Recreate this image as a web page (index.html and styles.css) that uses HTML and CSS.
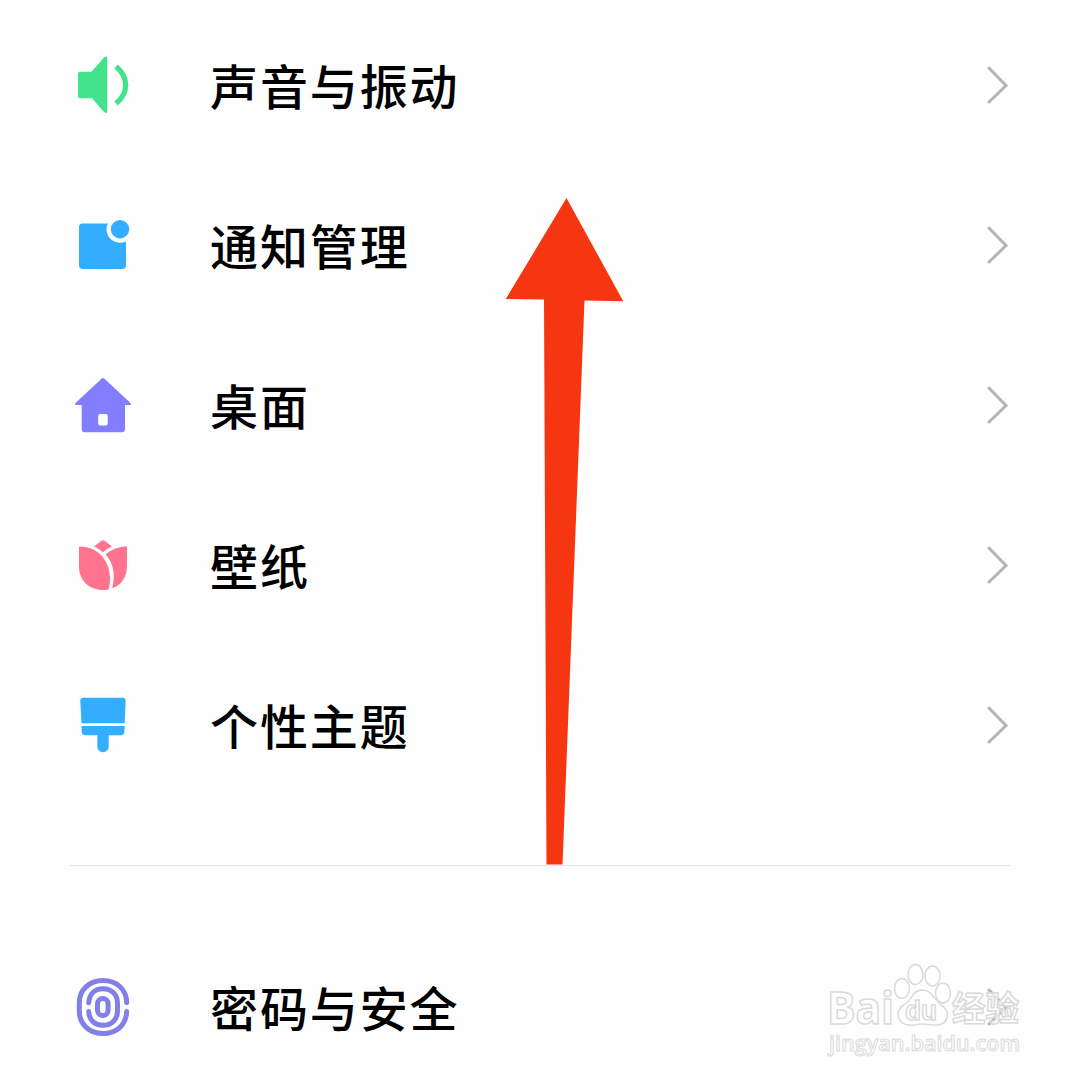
FILE: index.html
```html
<!DOCTYPE html>
<html lang="zh-CN">
<head>
<meta charset="utf-8">
<title>设置</title>
<link rel="stylesheet" href="styles.css">
</head>
<body>
<main class="screen">
  <ul class="group">
    <li class="row">
      <svg class="icon green" viewBox="73 55 60 60"><path d="M80 71.7H91.5L104 57.5Q107.3 55 107.3 58.500V111Q107.3 114.500 104 112L92 98.300H80Q78 98.300 78 96.300V73.700Q78 71.700 80 71.700Z"/><path class="arc" d="M116 66.500Q125.700 74.500 125.700 85T116 103.500"/></svg>
      <span class="label">声音与振动</span>
      <svg class="chevron" viewBox="0 0 24 40"><path d="M3 3L20 20.500L3 37"/></svg>
    </li>
    <li class="row">
      <svg class="icon blue" viewBox="73 215 60 60"><path d="M82.500 223.500H107.700A13.600 13.600 0 0 0 126 241.400V265Q126 269 122 269H83Q79 269 79 265V227Q79 223.500 82.500 223.500Z"/><circle cx="120" cy="229.200" r="9.200"/></svg>
      <span class="label">通知管理</span>
      <svg class="chevron" viewBox="0 0 24 40"><path d="M3 3L20 20.500L3 37"/></svg>
    </li>
    <li class="row">
      <svg class="icon purple" viewBox="73 375 60 60"><path fill-rule="evenodd" d="M101.500 378.700Q103 377.400 104.500 378.700L130.500 403Q132 405 129 405H125V429Q125 432.300 121.700 432.300H85Q81.700 432.300 81.700 429V405H77Q74 405 75.500 403ZM100.200 414Q98.200 414 98.200 416V423.500Q98.200 425.500 100.200 425.500H105.700Q107.700 425.500 107.700 423.500V416Q107.700 414 105.700 414Z"/></svg>
      <span class="label">桌面</span>
      <svg class="chevron" viewBox="0 0 24 40"><path d="M3 3L20 20.500L3 37"/></svg>
    </li>
    <li class="row">
      <svg class="icon pink" viewBox="73 535 60 60"><path d="M79 547.500Q79 546.500 80 546.500C98 546.500 110 561 110 579Q110 585 108.500 589.500C92 592.500 79 582 79 567Z"/><path d="M126 546.200Q127 546.200 127 547.200V566C127 577 121 585.500 112.300 588.200C115.500 575 113.500 563 105.500 554.500C111 549.500 118 547 126 546.200Z"/><path d="M94 546.500L101.500 540.800Q103 539.500 104.500 540.800L112 546.500Q107 548.500 102.800 552.200Q99 548.700 94 546.500Z"/></svg>
      <span class="label">壁纸</span>
      <svg class="chevron" viewBox="0 0 24 40"><path d="M3 3L20 20.500L3 37"/></svg>
    </li>
    <li class="row">
      <svg class="icon blue" viewBox="73 695 60 60"><path d="M83.500 697.700H122.500Q125.700 697.700 125.600 701L124.700 723.200H81.500L80.300 701Q80.200 697.700 83.500 697.700Z"/><path d="M81.500 726H124.700L124.300 732Q124 735.300 120.800 735.300H108.700V746.500A5.700 5.700 0 0 1 97.300 746.500V735.300H85.500Q82 735.300 81.800 732Z"/></svg>
      <span class="label">个性主题</span>
      <svg class="chevron" viewBox="0 0 24 40"><path d="M3 3L20 20.500L3 37"/></svg>
    </li>
  </ul>
  <hr class="divider">
  <ul class="group">
    <li class="row">
      <svg class="icon print" viewBox="73 977 60 60"><rect x="97.500" y="998.500" width="10.600" height="17" rx="5.300"/><path d="M88.700 1002.800C89.500 993.500 95 988.700 102.800 988.700C112 988.700 117.500 995 117.500 1003V1011C117.500 1019 112 1025.300 102.800 1025.300C95 1025.300 89 1020 88.700 1011.500"/><path d="M126.700 1002.800C126.500 989 116.500 980.500 103 980.500C89 980.500 79.300 990 79.300 1003V1011C79.300 1024 89 1033.500 103 1033.500C116.500 1033.500 126 1025 126.700 1011.500"/></svg>
      <span class="label">密码与安全</span>
      <svg class="chevron" viewBox="0 0 24 40"><path d="M3 3L20 20.500L3 37"/></svg>
    </li>
  </ul>
  <svg class="swipe" viewBox="0 0 120 670"><path d="M61.500 1L118.300 104.300L79.500 103.500L57.500 667.500H41.500L39 102.500L0.800 102Z"/></svg>
  <svg class="watermark" viewBox="820 950 220 120">
    <text class="brand" x="827" y="1024" textLength="67" lengthAdjust="spacingAndGlyphs">Bai</text>
    <g class="paw"><ellipse cx="902" cy="988.500" rx="7.500" ry="10"/><ellipse cx="915.500" cy="974.500" rx="7.500" ry="10"/><ellipse cx="932.500" cy="976" rx="7.500" ry="10"/><ellipse cx="943" cy="993" rx="7.500" ry="10"/><path d="M922 990C932 990 934 999 941 1005C951 1011 949 1025 936 1025C928 1025 924 1023 917 1024.500C906 1027 898 1023 898 1013C899 1005 908 1004 911 998C914 992 917 990 922 990Z"/></g>
    <text class="du" x="905" y="1020" textLength="32" lengthAdjust="spacingAndGlyphs">du</text>
    <text class="cjk" x="952" y="1021" textLength="67" lengthAdjust="spacingAndGlyphs">经验</text>
    <text class="site" x="829" y="1051" textLength="191" lengthAdjust="spacingAndGlyphs">jingyan.baidu.com</text>
  </svg>
</main>
</body>
</html>
```
FILE: styles.css
```css
* { box-sizing: border-box; }
body { margin: 0; background: #fefefe; }
.screen {
  position: relative;
  width: 1080px;
  height: 1080px;
  padding-top: 5px;
  overflow: hidden;
  font-family: "Noto Sans CJK SC", sans-serif;
}
.group { list-style: none; margin: 0; padding: 0; }
.row {
  display: flex;
  align-items: center;
  height: 160px;
  padding: 0 70px 0 73px;
}
.icon { width: 60px; height: 60px; flex: none; }
.green { fill: #43e38c; }
.blue { fill: #32adff; }
.purple { fill: #827eff; }
.pink { fill: #ff738f; }
.arc { fill: none; stroke: #43e38c; stroke-width: 5.2; }
.print { fill: none; stroke: #827fe6; stroke-width: 5; stroke-linecap: round; }
.label {
  flex: 1;
  margin-left: 77px;
  padding-bottom: 3px;
  font-size: 48px;
  font-weight: 500;
  line-height: 72px;
  letter-spacing: 1.9px;
  color: #000;
}
.chevron {
  width: 24px;
  height: 40px;
  fill: none;
  stroke: #b4b4b4;
  stroke-width: 3;
  stroke-linecap: round;
}
.divider {
  height: 1px;
  margin: 60px 70px 61px;
  border: 0;
  background: #e4e4e4;
}
.swipe {
  position: absolute;
  left: 505px;
  top: 197px;
  width: 120px;
  height: 670px;
  fill: #f63511;
}
.watermark {
  position: absolute;
  left: 820px;
  top: 950px;
  width: 220px;
  height: 120px;
  fill: #fff;
  fill-opacity: .75;
  stroke: #dadada;
  stroke-width: 1.5;
}
.brand { font: bold 44px "Open Sans", sans-serif; }
.du { font: bold 27px "Liberation Sans", sans-serif; }
.cjk { font: bold 34px "Noto Sans CJK SC", sans-serif; }
.site { font: 600 22px "Open Sans", sans-serif; stroke-width: 1; }
```
